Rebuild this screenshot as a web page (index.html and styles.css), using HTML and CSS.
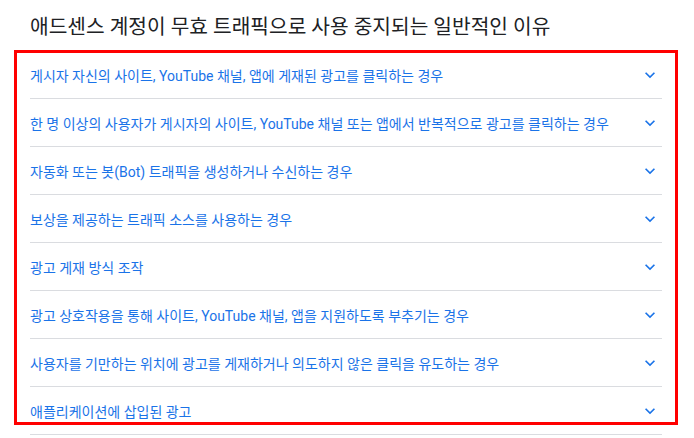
FILE: index.html
```html
<!DOCTYPE html>
<html lang="ko">
<head>
  <meta charset="UTF-8">
  <title>애드센스 무효 트래픽</title>
  <link rel="stylesheet" href="styles.css">
</head>
<body>

<h2 class="title">애드센스 계정이 무효 트래픽으로 사용 중지되는 일반적인 이유</h2>

<div class="frame">
  <ul class="faq">
    <li class="faq-row"><span>게시자 자신의 사이트, YouTube 채널, 앱에 게재된 광고를 클릭하는 경우</span><svg class="chev" viewBox="0 0 24 24"><path d="M16.59 8.59L12 13.17 7.41 8.59 6 10l6 6 6-6z"/></svg></li>
    <li class="faq-row"><span>한 명 이상의 사용자가 게시자의 사이트, YouTube 채널 또는 앱에서 반복적으로 광고를 클릭하는 경우</span><svg class="chev" viewBox="0 0 24 24"><path d="M16.59 8.59L12 13.17 7.41 8.59 6 10l6 6 6-6z"/></svg></li>
    <li class="faq-row"><span>자동화 또는 봇(Bot) 트래픽을 생성하거나 수신하는 경우</span><svg class="chev" viewBox="0 0 24 24"><path d="M16.59 8.59L12 13.17 7.41 8.59 6 10l6 6 6-6z"/></svg></li>
    <li class="faq-row"><span>보상을 제공하는 트래픽 소스를 사용하는 경우</span><svg class="chev" viewBox="0 0 24 24"><path d="M16.59 8.59L12 13.17 7.41 8.59 6 10l6 6 6-6z"/></svg></li>
    <li class="faq-row"><span>광고 게재 방식 조작</span><svg class="chev" viewBox="0 0 24 24"><path d="M16.59 8.59L12 13.17 7.41 8.59 6 10l6 6 6-6z"/></svg></li>
    <li class="faq-row"><span>광고 상호작용을 통해 사이트, YouTube 채널, 앱을 지원하도록 부추기는 경우</span><svg class="chev" viewBox="0 0 24 24"><path d="M16.59 8.59L12 13.17 7.41 8.59 6 10l6 6 6-6z"/></svg></li>
    <li class="faq-row"><span>사용자를 기만하는 위치에 광고를 게재하거나 의도하지 않은 클릭을 유도하는 경우</span><svg class="chev" viewBox="0 0 24 24"><path d="M16.59 8.59L12 13.17 7.41 8.59 6 10l6 6 6-6z"/></svg></li>
    <li class="faq-row"><span>애플리케이션에 삽입된 광고</span><svg class="chev" viewBox="0 0 24 24"><path d="M16.59 8.59L12 13.17 7.41 8.59 6 10l6 6 6-6z"/></svg></li>
  </ul>
  <div class="outline"></div>
</div>

</body>
</html>
```

FILE: styles.css
```css
body {
  margin: 0;
  background-color: #fff;
  font-family: Roboto, "Noto Sans CJK KR", sans-serif;
  overflow: hidden;
}

.title {
  margin: 0;
  padding: 15px 30px 0;
  height: 36px;
  line-height: 24px;
  font-size: 20.3px;
  font-weight: 400;
  color: #202124;
}

.frame {
  position: relative;
  margin: 0 32px 0 30px;
}

.faq {
  list-style: none;
  margin: 0;
  padding: 0;
}

.faq-row {
  display: flex;
  align-items: center;
  justify-content: space-between;
  height: 47px;
  border-bottom: 1px solid #dadce0;
  font-size: 14px;
  color: #1a73e8;
}

.chev {
  width: 20px;
  height: 20px;
  margin-right: 2px;
  fill: #1a73e8;
}

.outline {
  position: absolute;
  top: -1px;
  left: -16px;
  right: -16px;
  bottom: 10px;
  border: 3px solid #ff0000;
  pointer-events: none;
}
```
